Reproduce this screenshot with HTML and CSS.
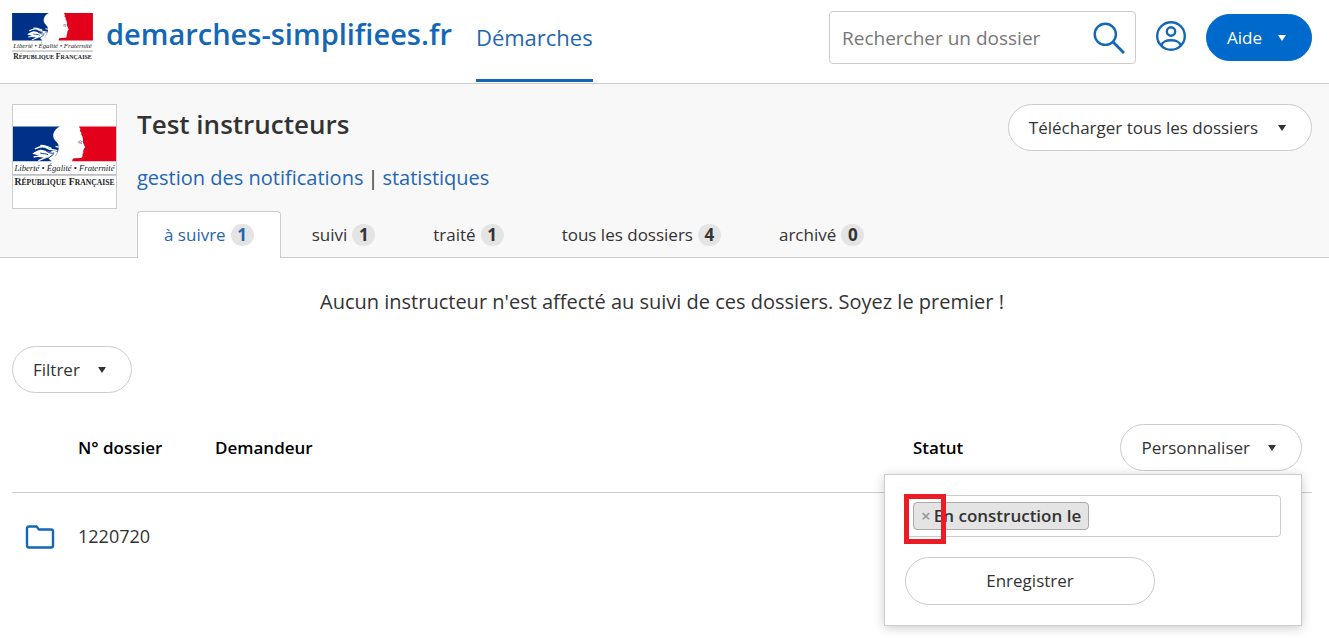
FILE: index.html
```html
<!DOCTYPE html>
<html lang="fr">
<head>
<meta charset="utf-8">
<meta name="viewport" content="width=device-width, initial-scale=1">
<title>Test instructeurs · demarches-simplifiees.fr</title>
<link rel="stylesheet" href="styles.css">
</head>
<body>
<header class="site-header">
  <a class="brand" href="#">
    <svg class="brand-logo" viewBox="0 0 310 184" role="img" aria-label="République Française">
      <g id="marianne">
        <path fill="#003189" d="M0 0H141C129 6 121 16 121 28C121 40 132 45 136 54C140 65 137 76 131 84L115 105H0Z"/>
        <path fill="#e2001a" d="M198 0H310V105H178C179 99 180 97 185 96L204 95C209 94 210 89 209 84L212 79L211 74L213 69C212 66 217 66 217 63C215 56 211 51 210 46C212 38 210 30 205 24L206 18L201 14L203 8Z"/>
        <path fill="#fff" d="M58 82C66 76 74 72 83 70C92 70 100 76 112 77L122 72L134 78L118 104L112 102C106 92 100 92 92 92C82 90 74 86 58 82Z"/>
        <path fill="none" stroke="#fff" stroke-width="4" d="M66 68C80 60 92 58 104 66C114 72 122 68 134 74M82 58C94 55 104 62 116 66M62 92C74 88 84 90 98 94L76 103M128 60L138 62"/>
        <path fill="none" stroke="#003189" stroke-width="3" d="M82 80C92 84 100 80 106 86M100 74C108 80 116 82 124 80M104 97L122 84"/>
        <path fill="none" stroke="#555" stroke-width="2" d="M195 48L203 43L208 46M198 50L206 49L205 53"/>
        <path stroke="#555" stroke-width="2" d="M0 146H310"/>
      </g>
      <text class="motto" x="155" y="133" text-anchor="middle">Liberté • Égalité • Fraternité</text>
      <text class="republic" x="155" y="177" text-anchor="middle">R<tspan class="caps">ÉPUBLIQUE</tspan> F<tspan class="caps">RANÇAISE</tspan></text>
    </svg>
    <span>demarches-simplifiees.fr</span>
  </a>
  <nav class="main-nav"><a href="#">Démarches</a></nav>
  <form class="search">
    <input type="search" aria-label="Rechercher un dossier" placeholder="Rechercher un dossier">
    <button type="button" aria-label="Rechercher">
      <svg width="32" height="32" viewBox="0 0 32 32" fill="none" stroke="#1467b5" stroke-width="2.4"><circle cx="12.3" cy="12.3" r="10.6"/><path d="M19.5 19.5L31 31" stroke-width="2.8"/></svg>
    </button>
  </form>
  <button class="account" type="button" aria-label="Mon compte">
    <svg width="32" height="32" viewBox="0 0 32 32" fill="none" stroke="#1467b5" stroke-width="2.4"><circle cx="16" cy="16" r="13.8"/><circle cx="16" cy="11.5" r="4.2"/><path d="M6.5 25.5C7.5 18.500 24.500 18.500 25.500 25.500"/></svg>
  </button>
  <button class="button primary" type="button">Aide <span class="caret"></span></button>
</header>

<section class="procedure">
  <div class="procedure-logo">
    <svg viewBox="0 0 310 184" role="img" aria-label="République Française">
      <use href="#marianne"/>
      <text class="motto" x="155" y="133" text-anchor="middle">Liberté • Égalité • Fraternité</text>
      <text class="republic" x="155" y="177" text-anchor="middle">R<tspan class="caps">ÉPUBLIQUE</tspan> F<tspan class="caps">RANÇAISE</tspan></text>
    </svg>
  </div>
  <div class="procedure-main">
    <h1>Test instructeurs</h1>
    <p class="procedure-links"><a href="#">gestion des notifications</a><span>|</span><a href="#">statistiques</a></p>
    <nav class="tabs">
      <a class="active" href="#">à suivre <span class="badge">1</span></a>
      <a href="#">suivi <span class="badge">1</span></a>
      <a href="#">traité <span class="badge">1</span></a>
      <a href="#">tous les dossiers <span class="badge">4</span></a>
      <a href="#">archivé <span class="badge">0</span></a>
    </nav>
  </div>
  <button class="button download" type="button">Télécharger tous les dossiers <span class="caret"></span></button>
</section>

<main>
  <p class="notice">Aucun instructeur n'est affecté au suivi de ces dossiers. Soyez le premier !</p>
  <button class="button" type="button">Filtrer <span class="caret"></span></button>
  <table class="dossiers">
    <thead>
      <tr>
        <th class="col-icon"></th>
        <th class="col-number">N° dossier</th>
        <th>Demandeur</th>
        <th class="col-status">Statut</th>
        <th class="col-action">
          <div class="dropdown">
            <button class="button" type="button" aria-expanded="true">Personnaliser <span class="caret"></span></button>
            <form class="dropdown-panel">
              <div class="multi-select">
                <span class="chip"><button type="button" aria-label="Retirer En construction le">×</button>En construction le</span>
                <input type="text" aria-label="Ajouter une colonne">
                <span class="highlight"></span>
              </div>
              <button class="button save" type="button">Enregistrer</button>
            </form>
          </div>
        </th>
      </tr>
    </thead>
    <tbody>
      <tr>
        <td class="col-icon"><svg width="30" height="24" viewBox="0 0 30 24" fill="none" stroke="#1467b5" stroke-width="2.4"><path d="M4 1.500H11.500L14 4.500H26Q28 4.500 28 6.500V20.500Q28 22.500 26 22.500H4Q2 22.500 2 20.500V3.500Q2 1.500 4 1.500Z"/></svg></td>
        <td><a href="#">1220720</a></td>
        <td></td>
        <td></td>
        <td></td>
      </tr>
    </tbody>
  </table>
</main>
</body>
</html>
```
FILE: styles.css
```css
* { box-sizing: border-box; }

body {
  min-height: 100vh;
  margin: 0;
  background: #fff;
  color: #333;
  font-family: "Open Sans", "Noto Sans", sans-serif;
  font-size: 17px;
  line-height: 24px;
}

a { color: #1f66b5; text-decoration: none; }

button, input { font: inherit; color: inherit; }

.motto { font: italic 26px "Liberation Serif", serif; fill: #222; }
.republic { font: bold 29px "Liberation Serif", serif; fill: #222; }
.republic .caps { font-size: 23px; }

.site-header {
  display: flex;
  height: 84px;
  padding: 11px 17px 0 12px;
  border-bottom: 1px solid #ccc;
}

.brand {
  display: flex;
  gap: 13px;
  color: #1467b5;
  font-size: 29px;
  font-weight: 600;
  line-height: 46px;
}
.brand-logo { width: 81px; height: 48px; margin-top: 2px; }

.main-nav { margin: 0 auto 1px 24px; display: flex; }
.main-nav a {
  border-bottom: 3px solid #1467b5;
  font-size: 22px;
  line-height: 52px;
}

.search {
  display: flex;
  align-items: center;
  width: 307px;
  height: 53px;
  padding: 0 10px 0 12px;
  border: 1px solid #ccc;
  border-radius: 4px;
}
.search input {
  flex: 1;
  min-width: 0;
  padding: 0;
  border: 0;
  outline: 0;
  background: none;
  font-size: 19px;
}
.search input::placeholder { color: #777; opacity: 1; }
.search button, .account {
  display: flex;
  padding: 0;
  border: 0;
  background: none;
}
.account { margin: 9px 19px 0; height: 32px; }

.button {
  display: inline-flex;
  align-items: center;
  justify-content: center;
  gap: 18px;
  height: 47px;
  padding: 0 25px 0 20px;
  border: 1px solid #ccc;
  border-radius: 24px;
  background: #fff;
  font-weight: 400;
  white-space: nowrap;
}
.button.download { gap: 20px; }
.button.primary {
  gap: 16px;
  margin-top: 3px;
  border-color: #0069cc;
  background: #0069cc;
  color: #fff;
}

.caret {
  border: 4px solid transparent;
  border-top: 6px solid currentColor;
  border-bottom: 0;
}

.procedure {
  display: flex;
  align-items: flex-start;
  padding: 20px 17px 0 12px;
  border-bottom: 1px solid #ccc;
  background: #f8f8f8;
}
.procedure-logo {
  display: flex;
  align-items: center;
  width: 105px;
  height: 105px;
  margin-right: 20px;
  border: 1px solid #ccc;
  background: #fff;
}
.procedure-logo svg { width: 103px; height: 62px; }
.procedure-main { flex: 1; }

h1 {
  margin: 0;
  font-size: 26px;
  font-weight: 600;
  line-height: 40px;
}
.procedure-links {
  display: flex;
  gap: 4px;
  margin: 20px 0;
  font-size: 20px;
  line-height: 27px;
}

.tabs { display: flex; gap: 4px; margin-bottom: -1px; }
.tabs a {
  display: flex;
  align-items: center;
  gap: 5px;
  height: 47px;
  padding: 0 26px;
  border: 1px solid transparent;
  border-bottom: 0;
  border-radius: 4px 4px 0 0;
  color: #333;
  white-space: nowrap;
}
.tabs .active { border-color: #ccc; background: #fff; color: #1f66b5; }
.badge {
  width: 23px;
  border-radius: 12px;
  background: #e4e4e4;
  font-weight: 700;
  line-height: 22px;
  text-align: center;
}

main { padding: 30px 17px 60px 12px; }
.notice { margin: 0 0 30px; font-size: 20px; line-height: 28px; text-align: center; }

.dossiers {
  width: 100%;
  margin-top: 31px;
  border-collapse: collapse;
  table-layout: fixed;
}
th { padding: 0 0 21px; color: #000; font-weight: 600; text-align: left; }
thead tr { border-bottom: 1px solid #ccc; }
td { height: 88px; padding: 0; }
td a { color: #333; font-size: 18px; }
td svg { display: block; margin-left: 13px; }
.col-icon { width: 66px; }
.col-number { width: 137px; }
.col-status { width: 180px; }
.col-action { width: 219px; padding-right: 10px; text-align: right; }

.dropdown { position: relative; display: flex; justify-content: flex-end; color: #333; }
.dropdown-panel {
  position: absolute;
  top: 50px;
  right: 0;
  z-index: 1;
  width: 418px;
  padding: 20px;
  border: 1px solid #ccc;
  background: #fff;
  box-shadow: 0 2px 10px rgba(0, 0, 0, 0.2);
  text-align: left;
}
.multi-select {
  position: relative;
  display: flex;
  align-items: center;
  height: 42px;
  margin-bottom: 20px;
  padding: 0 7px;
  border: 1px solid #ccc;
  border-radius: 4px;
}
.multi-select input {
  flex: 1;
  min-width: 0;
  border: 0;
  outline: 0;
  background: none;
}
.chip {
  display: flex;
  align-items: center;
  gap: 3px;
  height: 28px;
  padding: 0 7px;
  border: 1px solid #aaa;
  border-radius: 4px;
  background: #e4e4e4;
  white-space: nowrap;
}
.chip button { padding: 0; border: 0; background: none; color: #999; }
.highlight {
  position: absolute;
  top: -2px;
  left: -2px;
  width: 42px;
  height: 50px;
  border: 5px solid #ec1c24;
  pointer-events: none;
}
.button.save { width: 250px; height: 48px; padding: 0; }
```
